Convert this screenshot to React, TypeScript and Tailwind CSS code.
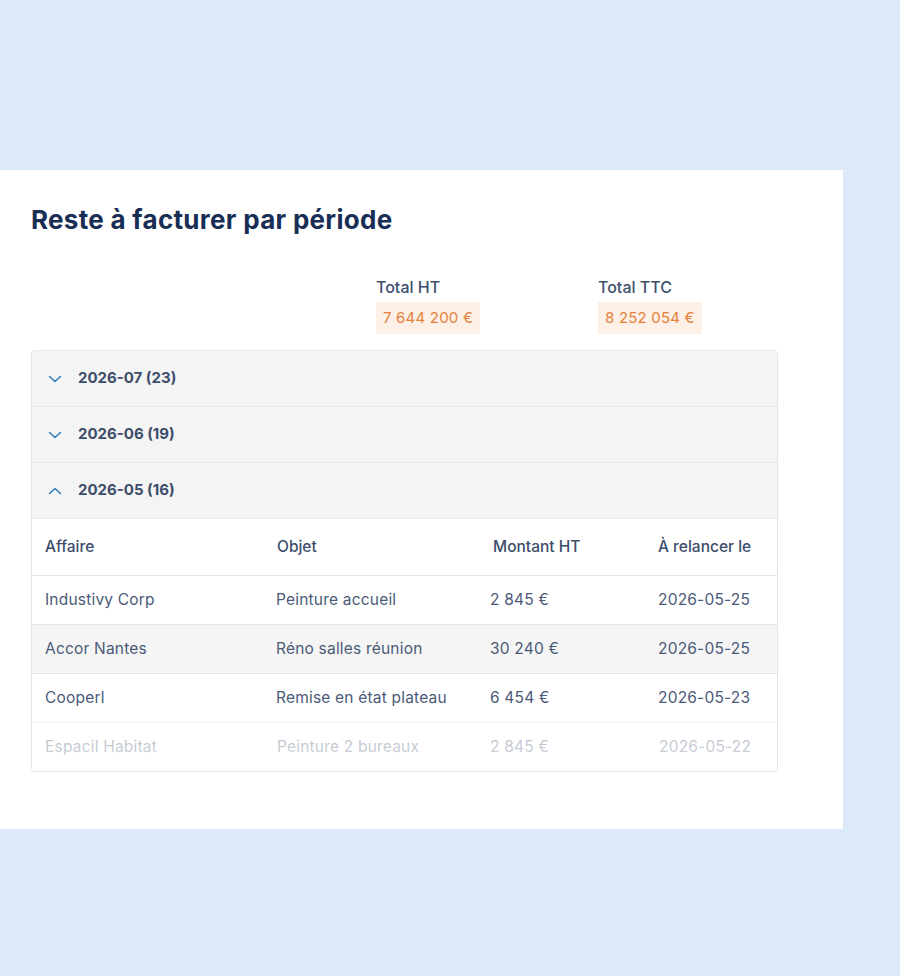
import React from "react";

const rows = [
  { a: "Industivy Corp", o: "Peinture accueil", m: "2 845 €", d: "2026-05-25", bg: "bg-white" },
  { a: "Accor Nantes", o: "Réno salles réunion", m: "30 240 €", d: "2026-05-25", bg: "bg-[#f5f5f5]" },
  { a: "Cooperl", o: "Remise en état plateau", m: "6 454 €", d: "2026-05-23", bg: "bg-white" },
];

function Chevron({ up }: { up?: boolean }) {
  return (
    <svg width="14" height="14" viewBox="0 0 14 14" fill="none" className="shrink-0">
      {up ? (
        <path d="M1.5 9.5 L7 4.5 L12.5 9.5" stroke="#2a7bb5" strokeWidth="1.5" strokeLinecap="round" strokeLinejoin="round" />
      ) : (
        <path d="M1.5 4.5 L7 9.5 L12.5 4.5" stroke="#2a7bb5" strokeWidth="1.5" strokeLinecap="round" strokeLinejoin="round" />
      )}
    </svg>
  );
}

function Group({ label, up }: { label: string; up?: boolean }) {
  return (
    <div className="h-[56px] flex items-center gap-[16px] pl-[16px] bg-[#f4f4f4] border-b border-[#e9e9e9]">
      <Chevron up={up} />
      <span className="text-[15px] font-bold text-[#3c4d6b]">{label}</span>
    </div>
  );
}

export default function App() {
  return (
    <div
      className="w-[900px] h-[976px] bg-[#dce9f8] pt-[170px]"
      style={{ fontFamily: "Inter, 'Liberation Sans', sans-serif" }}
    >
      <div className="w-[843px] h-[659px] bg-white pl-[31px]">
        <h1 className="pt-[33px] text-[26px] leading-[34px] font-bold text-[#182e55] tracking-[0.3px]">
          Reste à facturer par période
        </h1>
        <div className="flex mt-[40px] pl-[345px]">
          <div className="w-[222px] flex flex-col items-start">
            <span className="text-[16px] leading-[20px] font-medium text-[#3e4f6e]">Total HT</span>
            <span className="mt-[5px] h-[32px] px-[7px] flex items-center bg-[#fdf0e6] text-[#e3803a] text-[15px] tracking-[0.2px]">
              7 644 200 €
            </span>
          </div>
          <div className="flex flex-col items-start">
            <span className="text-[16px] leading-[20px] font-medium text-[#3e4f6e]">Total TTC</span>
            <span className="mt-[5px] h-[32px] px-[7px] flex items-center bg-[#fdf0e6] text-[#e3803a] text-[15px] tracking-[0.2px]">
              8 252 054 €
            </span>
          </div>
        </div>
        <div className="mt-[16px] w-[747px] border border-[#e6e6e6] rounded-[4px] overflow-hidden relative">
          <Group label="2026-07 (23)" />
          <Group label="2026-06 (19)" />
          <Group label="2026-05 (16)" up />
          <div className="h-[57px] flex items-center border-b border-[#e6e6e6] text-[15.5px] font-medium text-[#3c4d6b]">
            <span className="w-[245px] pl-[13px]">Affaire</span>
            <span className="w-[216px]">Objet</span>
            <span className="w-[165px]">Montant HT</span>
            <span>À relancer le</span>
          </div>
          {rows.map((r, i) => (
            <div
              key={i}
              className={`h-[49px] flex items-center border-b border-[#e6e6e6] text-[15.5px] tracking-[0.2px] text-[#4a5a77] ${r.bg}`}
            >
              <span className="w-[245px] pl-[13px]">{r.a}</span>
              <span className="w-[213px] -ml-[1px]">{r.o}</span>
              <span className="w-[169px] pl-[1px]">{r.m}</span>
              <span>{r.d}</span>
            </div>
          ))}
          <div className="h-[48px] flex items-center text-[15.5px] tracking-[0.2px] text-[#4a5a77] bg-white">
            <span className="w-[245px] pl-[13px]">Espacil Habitat</span>
            <span className="w-[213px]">Peinture 2 bureaux</span>
            <span className="w-[169px]">2 845 €</span>
            <span>2026-05-22</span>
          </div>
          <div className="absolute left-0 right-0 bottom-0 h-[52px] bg-gradient-to-b from-white/55 to-white/80 pointer-events-none" />
        </div>
      </div>
    </div>
  );
}
